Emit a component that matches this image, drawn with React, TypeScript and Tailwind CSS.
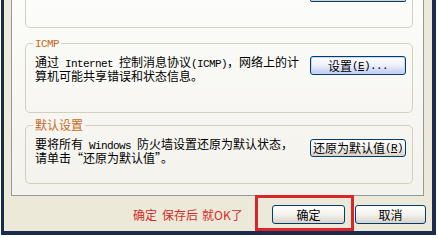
import React from "react";

function M({ children }: { children: React.ReactNode }) {
  return (
    <span className="font-['Liberation_Mono',monospace] text-[11px] tracking-[-0.6px]">
      {children}
    </span>
  );
}

function XPButton({
  children,
  className,
  blue,
}: {
  children: React.ReactNode;
  className: string;
  blue?: boolean;
}) {
  return (
    <div
      className={
        "flex items-center justify-center whitespace-pre rounded-[3px] border border-[#003C74] " +
        (blue
          ? "bg-linear-to-b from-[#FFFFFF] via-[#EDF0FA] to-[#BCC8EF] shadow-[inset_0_0_0_1px_#C9D6F6] "
          : "bg-linear-to-b from-[#FFFFFF] via-[#F3F2EE] to-[#D8D4C8] ") +
        className
      }
    >
      {children}
    </div>
  );
}

export default function App() {
  return (
    <div className="relative w-[438px] h-[238px] overflow-hidden bg-white font-['Noto_Sans_CJK_SC',sans-serif] text-[12px] leading-[12px] text-black">
      <div className="relative ml-[1px] w-[435px] h-[235px] bg-[#ECE9D8] border-l-[3px] border-r-[4px] border-b-[4px] border-[#1A2B4E] flex flex-col">
        {/* tab page */}
        <div className="ml-[7px] w-[413px] h-[196px] shrink-0 border-x border-b border-[#919B9C] bg-linear-to-b from-[#FCFCFA] to-[#F3F2EC] flex flex-col">
          <div className="ml-[13px] w-[388px] h-[28px] shrink-0 border-x border-b border-[#D0D0BF] rounded-b-[5px] flex justify-end pr-[6px]">
            <div className="w-[96px] h-[2px] border-x border-b border-[#003C74] rounded-b-[3px] bg-[#D8D4C8]" />
          </div>

          <fieldset className="ml-[13px] mt-[8px] w-[388px] h-[77px] shrink-0 border border-[#D0D0BF] rounded-[5px]">
            <legend className="ml-[7px] px-[2px] text-[#C66A22] leading-[12px]">
              <M>ICMP</M>
            </legend>
            <div className="flex items-start justify-between pt-[6px] pl-[9px] pr-[6px]">
              <div className="whitespace-pre">
                通过<M> Internet </M>控制消息协议<M>(ICMP)</M>，网络上的计
                <br />
                算机可能共享错误和状态信息。
              </div>
              <XPButton blue className="w-[96px] h-[19px]">
                设置<M>(<u>E</u>)...</M>
              </XPButton>
            </div>
          </fieldset>

          <fieldset className="ml-[13px] mt-[6px] w-[388px] h-[65px] shrink-0 border border-[#D0D0BF] rounded-[5px]">
            <legend className="ml-[7px] px-[2px] text-[#C66A22] leading-[12px]">
              默认设置
            </legend>
            <div className="flex items-start justify-between pt-[7px] pl-[9px] pr-[6px]">
              <div className="whitespace-pre">
                要将所有<M> Windows </M>防火墙设置还原为默认状态，
                <br />
                请单击“还原为默认值”。
              </div>
              <XPButton className="mt-[1px] w-[96px] h-[18px]">
                还原为默认值<M>(<u>R</u>)</M>
              </XPButton>
            </div>
          </fieldset>
        </div>

        {/* bottom row */}
        <div className="mt-[9px] h-[19px] shrink-0 flex items-center pl-[129px] pr-[6px]">
          <div className="flex items-center text-[#D42A2A] text-[12px] leading-[14px]">
            <span className="mr-[5px]">确定</span>
            <span className="mr-[4px]">保存后</span>
            <span>就OK了</span>
          </div>
          <div className="ml-auto flex gap-[10px]">
            <XPButton className="w-[73px] h-[19px]">确定</XPButton>
            <XPButton className="w-[71px] h-[19px]">取消</XPButton>
          </div>
        </div>

        {/* annotation */}
        <div className="absolute left-[251px] top-[195px] w-[99px] h-[36px] border-[3px] border-[#D8262A]" />
      </div>
    </div>
  );
}
